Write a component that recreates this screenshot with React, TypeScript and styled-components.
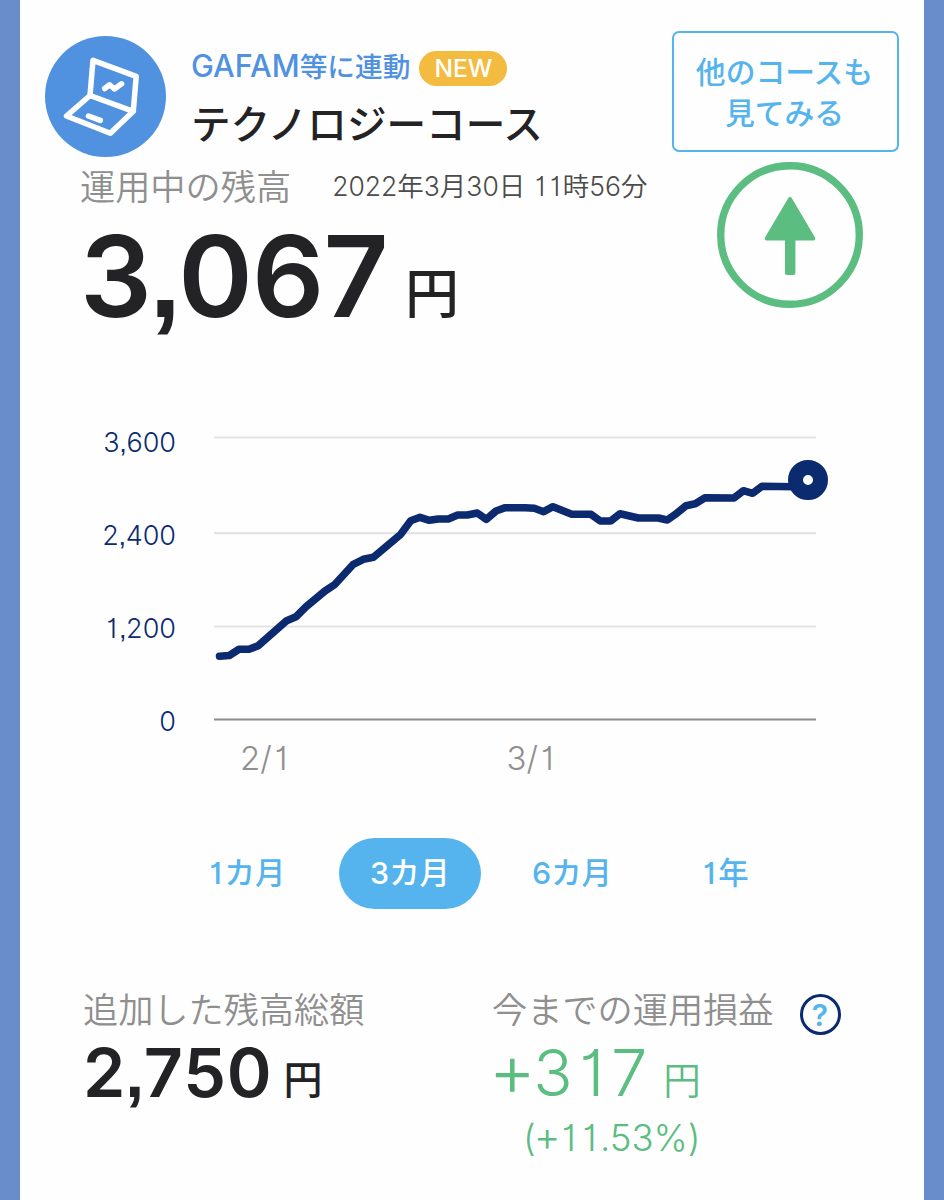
import React from "react";
import styled, { createGlobalStyle } from "styled-components";

const colors = {
  frame: "#688dca",
  logo: "#5092e0",
  sky: "#55b4ee",
  navy: "#0b2a70",
  ink: "#232224",
  muted: "#8f8f8f",
  green: "#5bbd80",
  amber: "#f3bb40",
};

const GlobalStyle = createGlobalStyle`
  * { box-sizing: border-box; }
  body { margin: 0; background: #fefefe; }
`;

const Screen = styled.main`
  width: 944px;
  height: 1200px;
  overflow: hidden;
  border: solid ${colors.frame};
  border-width: 0 20.5px 0 20px;
  background: #fefefe;
  color: ${colors.ink};
  font-family: "Inter", "Noto Sans CJK JP", sans-serif;
  font-feature-settings: "cv01", "calt" 0;
  white-space: nowrap;
`;

const Header = styled.header`
  display: flex;
  align-items: flex-start;
  height: 160px;
  padding: 31px 25px 0;
`;

const Logo = styled.svg`
  width: 121px;
  height: 121px;
  margin-top: 5px;
  flex: none;
`;

const Heading = styled.div`
  flex: 1;
  margin-left: 25px;
`;

const Tagline = styled.div`
  display: flex;
  align-items: flex-start;
  height: 36px;
  margin-top: 20px;
  color: ${colors.logo};
  font-size: 27.7px;
  line-height: 29px;
  font-weight: 500;
`;

const Latin = styled.span`
  font-size: 30.6px;
`;

const NewBadge = styled.span`
  display: flex;
  align-items: center;
  justify-content: center;
  width: 88px;
  height: 35px;
  margin-left: 9px;
  border-radius: 18px;
  background: ${colors.amber};
  color: #fff;
  font-size: 24.5px;
`;

const Title = styled.h1`
  margin: 13px 0 0;
  font-size: 39.6px;
  line-height: 50px;
  font-weight: 500;
`;

const CoursesButton = styled.button`
  width: 227px;
  height: 121px;
  padding: 0 2px 2px 0;
  border: 2px solid ${colors.sky};
  border-radius: 7px;
  background: transparent;
  color: ${colors.sky};
  font: 500 29.8px/41px "Noto Sans CJK JP", sans-serif;
`;

const Balance = styled.section`
  display: flex;
  justify-content: space-between;
  height: 260px;
  padding: 2px 61px 0 60px;
`;

const BalanceHead = styled.div`
  display: flex;
  align-items: center;
  height: 50px;
`;

const Label = styled.div`
  color: ${colors.muted};
  font-size: 35.2px;
  line-height: 50px;
  font-weight: 350;
`;

const Timestamp = styled.time`
  margin-left: 41px;
  padding-bottom: 3px;
  color: #4b4b4b;
  font-size: 26.5px;
  line-height: 46px;
  font-weight: 350;
`;

const One = styled.span`
  margin: 0 0.09em;
`;

const Comma = styled.span`
  font-family: "Liberation Sans", sans-serif;
  line-height: 0;
  margin: 0 -0.015em;
`;

const Plus = styled.span`
  font-size: 1.12em;
  line-height: 0;
  margin: 0 -0.05em 0 -0.05em;
`;

/* Sets the narrow "1" at the pitch of the other digits, a hooked comma and a wide plus sign. */
function Figures({ children }: { children: string }) {
  return (
    <span>
      {children.split(/([1,+])/).map((part, i) => {
        if (part === "1") return <One key={i}>1</One>;
        if (part === ",") return <Comma key={i}>,</Comma>;
        if (part === "+") return <Plus key={i}>+</Plus>;
        return part;
      })}
    </span>
  );
}

const Amount = styled.div<{ $size: number; $line: number; $weight: number; $spacing?: number; $color?: string }>`
  height: ${(p) => p.$line}px;
  font-size: ${(p) => p.$size}px;
  line-height: ${(p) => p.$line}px;
  font-weight: ${(p) => p.$weight};
  letter-spacing: ${(p) => p.$spacing ?? 0}px;
  color: ${(p) => p.$color ?? colors.ink};
`;

const Yen = styled.span<{ $size: number; $gap: number; $weight: number; $lift: number }>`
  margin-left: ${(p) => p.$gap}px;
  font-size: ${(p) => p.$size}px;
  font-weight: ${(p) => p.$weight};
  line-height: 0;
  vertical-align: ${(p) => p.$lift}px;
`;

const TrendIcon = styled.svg`
  width: 146px;
  height: 146px;
  flex: none;
`;

const ChartArea = styled.section`
  display: grid;
  grid-template-columns: 156px 680px;
  grid-template-rows: 318px 50px;
  column-gap: 16px;
`;

const YAxis = styled.div`
  display: flex;
  flex-direction: column;
  align-items: flex-end;
  color: ${colors.navy};
  font-size: 27px;
  line-height: 93.2px;
  font-weight: 350;
  margin-top: -24.5px;
`;

const Plot = styled.svg`
  width: 680px;
  height: 318px;
`;

const XAxis = styled.div`
  grid-column: 2;
  display: flex;
  gap: 216px;
  padding-left: 48px;
  color: ${colors.muted};
  font-size: 33px;
  line-height: 40px;
  font-weight: 300;
`;

const Tabs = styled.nav`
  display: flex;
  gap: 42px;
  height: 71px;
  margin: 50px 0 0 175px;
`;

const Tab = styled.button<{ $width: number; $active?: boolean }>`
  width: ${(p) => p.$width}px;
  padding: 0 0 5px;
  border: 0;
  border-radius: 36px;
  background: ${(p) => (p.$active ? colors.sky : "transparent")};
  color: ${(p) => (p.$active ? "#fff" : colors.sky)};
  font: inherit;
  font-feature-settings: inherit;
  font-size: 30.4px;
  font-weight: 500;
`;

const Totals = styled.section`
  display: grid;
  grid-template-columns: 409px 1fr;
  padding: 75px 0 0 63px;
`;

const LabelRow = styled.div`
  display: flex;
  align-items: center;
  height: 51px;
  padding-top: 1px;
`;

const Help = styled.span`
  display: flex;
  align-items: center;
  justify-content: center;
  width: 41px;
  height: 41px;
  margin: 9px 0 0 26px;
  border: 3px solid ${colors.navy};
  border-radius: 50%;
  color: ${colors.sky};
  font-size: 30px;
  font-weight: 600;
`;

const Percent = styled.div`
  margin-left: 31px;
  color: ${colors.green};
  font-size: 36.6px;
  line-height: 54px;
  font-weight: 300;
`;

const seriesPoints =
  "219.5,656.3 229.3,655.5 239,649.3 249,649.3 258.3,645.7 286.7,620.7 296,616.7 306,606.7 325,591 335,584.3 353.3,564.3 363.3,559.3 373.3,557.3 400.7,534.3 410.7,520.7 420,517.3 429.3,520.3 438.3,519 448.3,519 457.7,515 467.3,515 477.3,513 486.3,519.3 496,511 505.3,507.7 525,507.7 534.3,508.3 543.7,511.7 553,506.7 571.7,514.3 591,514.3 600.3,521 610.7,521 620,513.7 638.3,518 658.3,518 667.3,520 676.7,513.3 686,505.7 695.3,503.7 705,497.7 734,498 743.3,490.7 752.7,493.3 762,486.3 795,486.7";

const periods = [
  { label: "1カ月", width: 102 },
  { label: "3カ月", width: 142, active: true },
  { label: "6カ月", width: 98 },
  { label: "1年", width: 123 },
];

export default function App() {
  return (
    <>
      <GlobalStyle />
      <Screen>
        <Header>
          <Logo viewBox="45 36 121 121" fill="none" stroke="#fff" strokeWidth="5.5" strokeLinejoin="round" strokeLinecap="round">
            <circle cx="105.5" cy="96.5" r="60.5" fill={colors.logo} stroke="none" />
            <path d="M93 60.3 136.2 76.3 133.3 111.3 90 95.5ZM90 95.5 66.5 116 110.3 133.3 133.3 111.3" />
            <path d="m88.5 116 11.8 4.4M104.7 88.5 109.6 84.8 114.4 89 121.6 83.8" />
          </Logo>
          <Heading>
            <Tagline>
              <span><Latin>GAFAM</Latin>等に連動</span>
              <NewBadge>NEW</NewBadge>
            </Tagline>
            <Title>テクノロジーコース</Title>
          </Heading>
          <CoursesButton>他のコースも<br />見てみる</CoursesButton>
        </Header>

        <Balance>
          <div>
            <BalanceHead>
              <Label>運用中の残高</Label>
              <Timestamp><Figures>2022年3月30日 11時56分</Figures></Timestamp>
            </BalanceHead>
            <Amount $size={113} $line={128} $weight={600} $spacing={-0.8}>
              <Figures>3,067</Figures><Yen $size={54} $gap={17} $weight={500} $lift={3}>円</Yen>
            </Amount>
          </div>
          <TrendIcon viewBox="0 0 146 146">
            <circle cx="73" cy="73" r="69.3" fill="none" stroke={colors.green} strokeWidth="7.4" />
            <path d="M73 37 49.7 76.5H96.3Z" fill={colors.green} stroke={colors.green} strokeWidth="4" strokeLinejoin="round" />
            <rect x="68" y="72" width="10.4" height="41" rx="2" fill={colors.green} />
          </TrendIcon>
        </Balance>

        <ChartArea>
          <YAxis>
            <Figures>3,600</Figures>
            <Figures>2,400</Figures>
            <Figures>1,200</Figures>
            <Figures>0</Figures>
          </YAxis>
          <Plot viewBox="192 420 680 318">
            <g stroke="#e4e4e4" strokeWidth="2.2">
              <path d="M214 437.5H816M214 533.2H816M214 626.5H816" />
              <path d="M214 719.5H816" stroke="#8c8c8c" />
            </g>
            <polyline points={seriesPoints} fill="none" stroke={colors.navy} strokeWidth="7.6" strokeLinejoin="round" strokeLinecap="round" />
            <circle cx="808" cy="480" r="12.5" fill="#fff" stroke={colors.navy} strokeWidth="15" />
          </Plot>
          <XAxis>
            <Figures>2/1</Figures>
            <Figures>3/1</Figures>
          </XAxis>
        </ChartArea>

        <Tabs>
          {periods.map((p) => (
            <Tab key={p.label} $width={p.width} $active={p.active}><Figures>{p.label}</Figures></Tab>
          ))}
        </Tabs>

        <Totals>
          <div>
            <LabelRow><Label>追加した残高総額</Label></LabelRow>
            <Amount $size={68} $line={75} $weight={600} $spacing={0.8}>
              <Figures>2,750</Figures><Yen $size={39} $gap={11} $weight={500} $lift={3}>円</Yen>
            </Amount>
          </div>
          <div>
            <LabelRow>
              <Label>今までの運用損益</Label>
              <Help>?</Help>
            </LabelRow>
            <Amount $size={65} $line={76} $weight={350} $spacing={0.8} $color={colors.green}>
              <Figures>+317</Figures><Yen $size={37.5} $gap={15} $weight={350} $lift={2}>円</Yen>
            </Amount>
            <Percent><Figures>(+11.53%)</Figures></Percent>
          </div>
        </Totals>
      </Screen>
    </>
  );
}
